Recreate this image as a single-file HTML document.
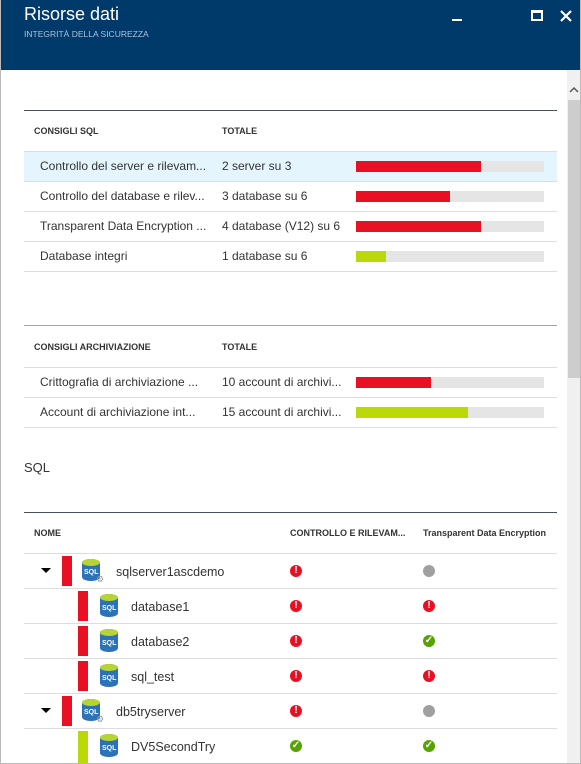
<!DOCTYPE html><html><head><meta charset="utf-8"><style>
*{margin:0;padding:0;box-sizing:border-box}
body{width:581px;height:764px;overflow:hidden;background:#fff;font-family:"Liberation Sans",sans-serif;color:#333;position:relative}
.a{position:absolute}
.hd{left:0;top:0;width:581px;height:70px;background:#003a6b}
.t{font-size:12px;white-space:nowrap}
.h{font-size:9px;font-weight:bold;white-space:nowrap;color:#333}
.sep{height:1px;background:#ddd}
.trk{background:#e5e5e5;height:11px;width:188px;left:356px}
.red{background:#e81123}.grn{background:#bad80a}
.ic{width:12px;height:12px;border-radius:50%;color:#fff;font-size:10px;font-weight:bold;text-align:center;line-height:12px}
</style></head><body>
<div class="a hd"></div>
<div class="a" style="left:24px;top:4px;font-size:18px;color:#fff">Risorse dati</div>
<div class="a" style="left:24px;top:29px;font-size:8.5px;color:#a9c3dc">INTEGRITÀ DELLA SICUREZZA</div>
<div class="a" style="left:452px;top:19px;width:10px;height:2px;background:#fff"></div>
<div class="a" style="left:531px;top:10px;width:12px;height:11px;border:2px solid #fff;border-top-width:3px"></div>
<svg class="a" style="left:560px;top:10px" width="12" height="12"><path d="M1 1L11 11M11 1L1 11" stroke="#fff" stroke-width="2.2"/></svg>
<div class="a" style="left:567px;top:70px;width:14px;height:694px;background:#f0f0f0"></div>
<svg class="a" style="left:569px;top:86px" width="10" height="8"><path d="M1 6L5 2L9 6" stroke="#555" stroke-width="1.5" fill="none"/></svg>
<div class="a" style="left:568px;top:100px;width:12px;height:278px;background:#cdcdcd"></div>

<div class="a" style="left:24px;top:110px;width:533px;height:1px;background:#4a4f55"></div>
<div class="a h" style="left:34px;top:126px">CONSIGLI SQL</div>
<div class="a h" style="left:222px;top:126px">TOTALE</div>
<div class="a" style="left:24px;top:152px;width:533px;height:29px;background:#e5f5fd"></div>
<div class="a sep" style="left:24px;top:151px;width:533px"></div>
<div class="a sep" style="left:24px;top:181px;width:533px"></div>
<div class="a sep" style="left:24px;top:211px;width:533px"></div>
<div class="a sep" style="left:24px;top:241px;width:533px"></div>
<div class="a sep" style="left:24px;top:271px;width:533px"></div>
<div class="a t" style="left:40px;top:159px">Controllo del server e rilevam...</div><div class="a t" style="left:222px;top:159px">2 server su 3</div>
<div class="a t" style="left:40px;top:189px">Controllo del database e rilev...</div><div class="a t" style="left:222px;top:189px">3 database su 6</div>
<div class="a t" style="left:40px;top:219px">Transparent Data Encryption ...</div><div class="a t" style="left:222px;top:219px">4 database (V12) su 6</div>
<div class="a t" style="left:40px;top:249px">Database integri</div><div class="a t" style="left:222px;top:249px">1 database su 6</div>
<div class="a trk" style="top:161px"></div><div class="a red" style="left:356px;top:161px;width:125px;height:11px"></div>
<div class="a trk" style="top:191px"></div><div class="a red" style="left:356px;top:191px;width:94px;height:11px"></div>
<div class="a trk" style="top:221px"></div><div class="a red" style="left:356px;top:221px;width:125px;height:11px"></div>
<div class="a trk" style="top:251px"></div><div class="a grn" style="left:356px;top:251px;width:30px;height:11px"></div>

<div class="a" style="left:24px;top:325px;width:533px;height:1px;background:#9fa4a9"></div>
<div class="a h" style="left:34px;top:342px">CONSIGLI ARCHIVIAZIONE</div>
<div class="a h" style="left:222px;top:342px">TOTALE</div>
<div class="a sep" style="left:24px;top:367px;width:533px"></div>
<div class="a sep" style="left:24px;top:397px;width:533px"></div>
<div class="a sep" style="left:24px;top:427px;width:533px"></div>
<div class="a t" style="left:40px;top:375px">Crittografia di archiviazione ...</div><div class="a t" style="left:222px;top:375px">10 account di archivi...</div>
<div class="a t" style="left:40px;top:405px">Account di archiviazione int...</div><div class="a t" style="left:222px;top:405px">15 account di archivi...</div>
<div class="a trk" style="top:377px"></div><div class="a red" style="left:356px;top:377px;width:75px;height:11px"></div>
<div class="a trk" style="top:407px"></div><div class="a grn" style="left:356px;top:407px;width:112px;height:11px"></div>

<div class="a" style="left:24px;top:460px;font-size:13px">SQL</div>
<div class="a" style="left:24px;top:512px;width:533px;height:1px;background:#4a4f55"></div>
<div class="a h" style="left:34px;top:528px">NOME</div>
<div class="a h" style="left:290px;top:528px">CONTROLLO E RILEVAM...</div>
<div class="a h" style="left:423px;top:528px">Transparent Data Encryption</div>
<div class="a sep" style="left:24px;top:553px;width:533px"></div>
<div class="a sep" style="left:24px;top:588px;width:533px"></div>
<div class="a sep" style="left:24px;top:623px;width:533px"></div>
<div class="a sep" style="left:24px;top:658px;width:533px"></div>
<div class="a sep" style="left:24px;top:693px;width:533px"></div>
<div class="a sep" style="left:24px;top:728px;width:533px"></div>

<div class="a" style="left:41px;top:568px;width:0;height:0;border-left:5px solid transparent;border-right:5px solid transparent;border-top:5px solid #000"></div>
<div class="a red" style="left:62px;top:556px;width:10px;height:30px"></div>
<div class="a" style="left:82px;top:559px;width:18px;height:22px;background:#2b72b8;border-radius:9px/4px"></div><div class="a" style="left:82px;top:559px;width:18px;height:7px;background:#b8d432;border-radius:50%"></div><div class="a" style="left:84px;top:569px;font-size:7px;color:#fff;font-weight:bold">SQL</div><div class="a" style="left:96px;top:574px;font-size:9px;color:#999">⚙</div>
<div class="a t" style="left:116px;top:565px;font-size:12.5px">sqlserver1ascdemo</div>
<div class="a ic red" style="left:290px;top:565px">!</div>
<div class="a ic" style="left:423px;top:565px;background:#a0a0a0"></div>

<div class="a red" style="left:78px;top:591px;width:10px;height:30px"></div>
<div class="a" style="left:100px;top:594px;width:18px;height:23px;background:#2b72b8;border-radius:9px/4px"></div><div class="a" style="left:100px;top:594px;width:18px;height:7px;background:#b8d432;border-radius:50%"></div><div class="a" style="left:102px;top:605px;font-size:7px;color:#fff;font-weight:bold">SQL</div>
<div class="a t" style="left:131px;top:600px;font-size:12.5px">database1</div>
<div class="a ic red" style="left:290px;top:600px">!</div><div class="a ic red" style="left:423px;top:600px">!</div>

<div class="a red" style="left:78px;top:626px;width:10px;height:30px"></div>
<div class="a" style="left:100px;top:629px;width:18px;height:23px;background:#2b72b8;border-radius:9px/4px"></div><div class="a" style="left:100px;top:629px;width:18px;height:7px;background:#b8d432;border-radius:50%"></div><div class="a" style="left:102px;top:640px;font-size:7px;color:#fff;font-weight:bold">SQL</div>
<div class="a t" style="left:131px;top:635px;font-size:12.5px">database2</div>
<div class="a ic red" style="left:290px;top:635px">!</div><div class="a ic" style="left:423px;top:635px;background:#57a300">✓</div>

<div class="a red" style="left:78px;top:661px;width:10px;height:30px"></div>
<div class="a" style="left:100px;top:664px;width:18px;height:23px;background:#2b72b8;border-radius:9px/4px"></div><div class="a" style="left:100px;top:664px;width:18px;height:7px;background:#b8d432;border-radius:50%"></div><div class="a" style="left:102px;top:675px;font-size:7px;color:#fff;font-weight:bold">SQL</div>
<div class="a t" style="left:131px;top:670px;font-size:12.5px">sql_test</div>
<div class="a ic red" style="left:290px;top:670px">!</div><div class="a ic red" style="left:423px;top:670px">!</div>

<div class="a" style="left:41px;top:708px;width:0;height:0;border-left:5px solid transparent;border-right:5px solid transparent;border-top:5px solid #000"></div>
<div class="a red" style="left:62px;top:696px;width:10px;height:30px"></div>
<div class="a" style="left:82px;top:699px;width:18px;height:22px;background:#2b72b8;border-radius:9px/4px"></div><div class="a" style="left:82px;top:699px;width:18px;height:7px;background:#b8d432;border-radius:50%"></div><div class="a" style="left:84px;top:709px;font-size:7px;color:#fff;font-weight:bold">SQL</div><div class="a" style="left:96px;top:714px;font-size:9px;color:#999">⚙</div>
<div class="a t" style="left:116px;top:705px;font-size:12.5px">db5tryserver</div>
<div class="a ic red" style="left:290px;top:705px">!</div>
<div class="a ic" style="left:423px;top:705px;background:#a0a0a0"></div>

<div class="a grn" style="left:78px;top:731px;width:10px;height:33px"></div>
<div class="a" style="left:100px;top:734px;width:18px;height:23px;background:#2b72b8;border-radius:9px/4px"></div><div class="a" style="left:100px;top:734px;width:18px;height:7px;background:#b8d432;border-radius:50%"></div><div class="a" style="left:102px;top:745px;font-size:7px;color:#fff;font-weight:bold">SQL</div>
<div class="a t" style="left:131px;top:740px;font-size:12.5px">DV5SecondTry</div>
<div class="a ic" style="left:290px;top:740px;background:#57a300">✓</div><div class="a ic" style="left:423px;top:740px;background:#57a300">✓</div>
<div class="a" style="left:0;top:0;width:581px;height:764px;border:1px solid #bbb;border-top:none"></div>
</body></html>
